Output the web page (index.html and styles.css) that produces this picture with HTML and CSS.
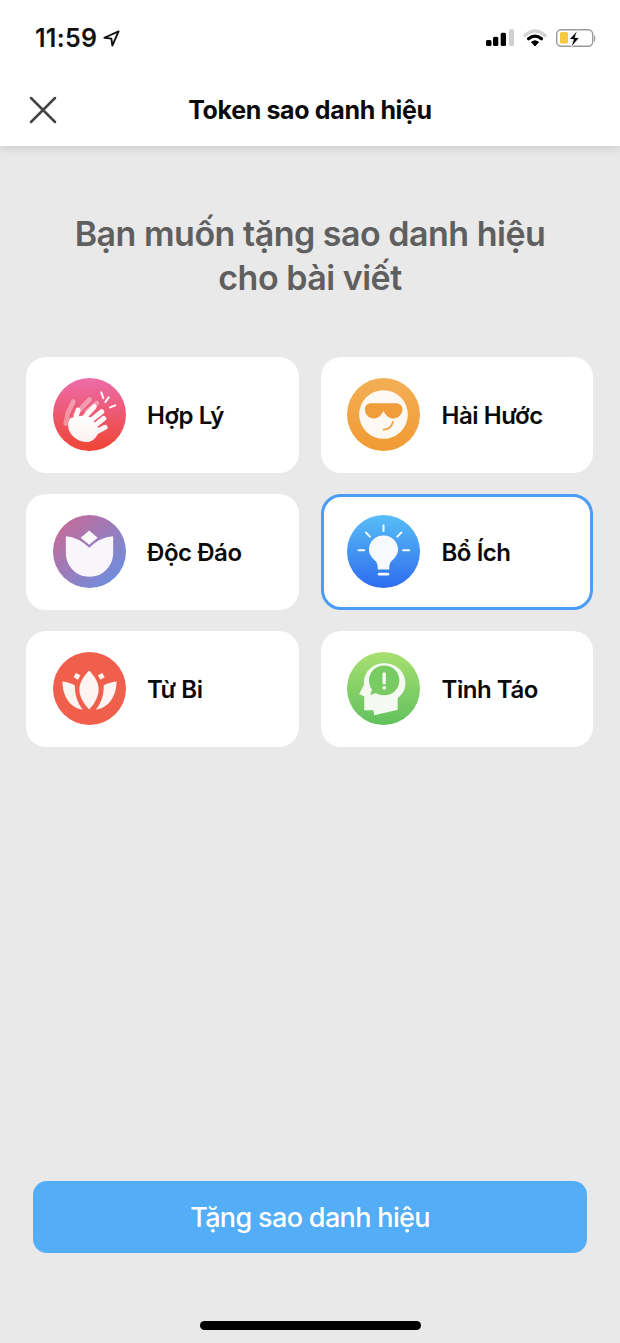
FILE: index.html
```html
<!DOCTYPE html>
<html lang="vi">
<head>
<meta charset="utf-8">
<title>Token sao danh hiệu</title>
<link rel="stylesheet" href="styles.css">
</head>
<body>
<div class="screen">
  <header class="top">
    <div class="status">
      <div class="clock">
        <span class="time">11:59</span>
        <svg class="loc" viewBox="0 0 18 18"><path d="M16.5 1.500 1.500 8.200l7.400.9 1 7.400z" fill="none" stroke="#111" stroke-width="2" stroke-linejoin="round"/></svg>
      </div>
      <svg class="sys" viewBox="0 0 112 20">
        <rect x="2" y="12" width="5.500" height="6" rx="1.500" fill="#000"/>
        <rect x="9" y="8.700" width="5.300" height="9.300" rx="1.500" fill="#000"/>
        <rect x="16.700" y="4.700" width="5.300" height="13.300" rx="1.500" fill="#000"/>
        <rect x="25" y="1.300" width="5" height="16.700" rx="1.500" fill="#d0d0d0"/>
        <path d="M41 7.500Q51-1.500 61 7.500" fill="none" stroke="#d4d4d4" stroke-width="3.500" stroke-linecap="round"/>
        <path d="M44.500 10.800Q51 5.500 57.500 10.800" fill="none" stroke="#000" stroke-width="3.200" stroke-linecap="round"/>
        <path d="M47.500 14Q51 11.500 54.500 14L51 18z" fill="#000" stroke="#000" stroke-linejoin="round"/>
        <rect x="72.700" y="1.700" width="36" height="16.500" rx="4.500" fill="#fff" stroke="#9a9a9a" stroke-width="1.400"/>
        <rect x="76" y="4" width="8" height="11.500" rx="1.500" fill="#f7c93e"/>
        <path d="M110 7c1.700.4 1.700 6.600 0 7z" fill="#9a9a9a"/>
        <path d="M93.500 2.500 85 11.500h4.500L87 19.500l8.500-10H91z" fill="#000" stroke="#fff" stroke-width=".8"/>
      </svg>
    </div>
    <div class="nav">
      <svg class="close" viewBox="0 0 28 28"><path d="M2 2 26 26M26 2 2 26" stroke="#444" stroke-width="2.500" stroke-linecap="round"/></svg>
      <h1 class="title">Token sao danh hiệu</h1>
    </div>
  </header>

  <main class="body">
    <h2 class="prompt">Bạn muốn tặng sao danh hiệu<br>cho bài viết</h2>
    <div class="grid">
      <div class="card">
        <svg class="icon" viewBox="0 0 216 216">
          <defs>
            <linearGradient id="g1" x1="0" y1="0" x2="0" y2="1"><stop offset="0" stop-color="#ec6cab"/><stop offset="1" stop-color="#ef4433"/></linearGradient>
            <linearGradient id="h1" x1="0" y1="0" x2="0" y2="1"><stop offset="0" stop-color="#ffffff"/><stop offset="1" stop-color="#fdf0f0"/></linearGradient>
          </defs>
          <circle cx="108" cy="108" r="108" fill="url(#g1)"/>
          <g fill="none" stroke="#fff" stroke-linecap="round">
            <g opacity=".38" stroke-width="14">
              <path d="M60 70 42 108M108 64 66 108M130 74 100 100M44 105 38 135"/>
            </g>
            <path d="M143 43 149 60M165 57 155 71M184 81 169 87" stroke-width="6"/>
          </g>
          <g fill="none" stroke="#fef8f8" stroke-width="15" stroke-linecap="round">
            <path d="M62 135 74 95M85 125 122 85M100 135 144 100M112 150 150 120M118 165 154 146"/>
          </g>
          <path d="M52 118C44 128 42 145 50 160 60 180 85 192 105 189 122 186 134 170 136 150L112 116 84 112Z" fill="url(#h1)"/>
        </svg>
        <span class="label">Hợp Lý</span>
      </div>
      <div class="card">
        <svg class="icon" viewBox="0 0 216 216">
          <defs>
            <linearGradient id="g2" x1="0" y1="0" x2="0" y2="1"><stop offset="0" stop-color="#f3af55"/><stop offset="1" stop-color="#f09a33"/></linearGradient>
          </defs>
          <circle cx="108" cy="108" r="108" fill="url(#g2)"/>
          <circle cx="108" cy="108" r="72" fill="#fdf8f1"/>
          <path d="M72 75H144C156 75 164 83 164 92 164 108 152 120 136 120 122 120 113 108 108 98 103 108 94 120 80 120 64 120 53 108 53 92 53 83 60 75 72 75Z" fill="#f09e3a"/>
          <path d="M108 153Q130 152 136 130" fill="none" stroke="#f09e3a" stroke-width="5" stroke-linecap="round"/>
        </svg>
        <span class="label">Hài Hước</span>
      </div>
      <div class="card">
        <svg class="icon" viewBox="0 0 216 216">
          <defs>
            <linearGradient id="g3" x1="0" y1="0" x2="1" y2="1"><stop offset=".1" stop-color="#c56b98"/><stop offset=".9" stop-color="#6c8fe0"/></linearGradient>
          </defs>
          <circle cx="108" cy="108" r="108" fill="url(#g3)"/>
          <path d="M107 46 132 67 107 88 82 67Z" fill="#fbf8fc"/>
          <path d="M38 63Q76 66 107 97 138 66 178 63V112C178 152 148 183 108 183 68 183 38 152 38 112Z" fill="#f8f6fb"/>
        </svg>
        <span class="label">Độc Đáo</span>
      </div>
      <div class="card selected">
        <svg class="icon" viewBox="0 0 216 216">
          <defs>
            <linearGradient id="g4" x1="0" y1="0" x2="0" y2="1"><stop offset="0" stop-color="#58bef6"/><stop offset="1" stop-color="#2e6cef"/></linearGradient>
          </defs>
          <circle cx="108" cy="108" r="108" fill="url(#g4)"/>
          <path d="M108 30V47M56 52 68 64M161 52 149 64M34 104H51M166 104H184" stroke="#f5fafe" stroke-width="6" stroke-linecap="round" fill="none"/>
          <path d="M108 61C131 61 151 79 151 102 151 118 140 128 131 137 126 143 125 150 125 161H91C91 150 90 143 85 137 76 128 65 118 65 102 65 79 85 61 108 61Z" fill="#f6fafe"/>
          <rect x="91" y="171" width="34" height="8" rx="4" fill="#f6fafe"/>
        </svg>
        <span class="label">Bổ Ích</span>
      </div>
      <div class="card">
        <svg class="icon" viewBox="0 0 216 216">
          <circle cx="108" cy="108" r="108" fill="#f05f4b"/>
          <path d="M107 55C126 75 135 92 135 112 135 133 122 155 107 170 92 155 78 133 78 112 78 92 88 75 107 55Z" fill="#fdf4f2"/>
          <path d="M28 87C42 88 56 93 65 99 64 125 72 150 88 170 55 167 28 135 28 87Z" fill="#fdf4f2"/>
          <path d="M188 87C174 88 160 93 150 99 151 125 143 150 127 170 160 167 188 135 188 87Z" fill="#fdf4f2"/>
          <path d="M68 62 81 69 74 82 61 75ZM146 62 133 69 140 82 153 75Z" fill="#fdf4f2"/>
        </svg>
        <span class="label">Từ Bi</span>
      </div>
      <div class="card">
        <svg class="icon" viewBox="0 0 216 216">
          <defs>
            <linearGradient id="g6" x1="0" y1="0" x2="0" y2="1"><stop offset="0" stop-color="#a8e071"/><stop offset="1" stop-color="#62c15e"/></linearGradient>
          </defs>
          <circle cx="108" cy="108" r="108" fill="url(#g6)"/>
          <path d="M110 33C145 33 173 58 173 92 173 112 163 127 150 137V171L81 187 78 172H51V132L36 124 50 98V92C50 58 76 33 110 33Z" fill="#f4faf1"/>
          <path d="M110 40C136 40 155 60 155 84 155 110 134 128 110 128 100 128 92 125 85 121L69 127 74 111C68 103 65 94 65 84 65 60 85 40 110 40Z" fill="#79cb64"/>
          <rect x="105" y="60" width="10" height="36" rx="5" fill="#f4faf1"/>
          <circle cx="110" cy="106" r="5.500" fill="#f4faf1"/>
        </svg>
        <span class="label">Tỉnh Táo</span>
      </div>
    </div>
    <button class="cta" type="button">Tặng sao danh hiệu</button>
    <div class="home"></div>
  </main>
</div>
</body>
</html>
```

FILE: styles.css
```css
* { box-sizing: border-box; }
html, body { margin: 0; padding: 0; }
body { font-family: "Inter", "Liberation Sans", sans-serif; background: #e9e9e9; }
.screen { width: 620px; height: 1343px; display: flex; flex-direction: column; overflow: hidden; }

.top { height: 146px; background: #fff; box-shadow: 0 1px 10px rgba(0,0,0,.16); position: relative; z-index: 1; flex: none; }
.status { height: 76px; display: flex; justify-content: space-between; align-items: center; padding: 0 24px 0 35px; }
.clock { display: flex; align-items: center; gap: 6px; }
.time { font-size: 25px; font-weight: 600; color: #111; letter-spacing: .3px; }
.loc { width: 17px; height: 17px; }
.sys { width: 112px; height: 20px; }
.nav { height: 70px; display: flex; align-items: center; justify-content: center; position: relative; padding-bottom: 3px; }
.close { position: absolute; left: 29px; top: 20px; width: 28px; height: 28px; }
.title { margin: 0; font-size: 25px; font-weight: 700; color: #0b0b0b; letter-spacing: -.35px; }

.body { flex: 1; display: flex; flex-direction: column; }
.prompt { margin: 66px 0 0; text-align: center; font-size: 34px; line-height: 44px; font-weight: 600; color: #5f5f5f; letter-spacing: -.5px; }
.grid { margin-top: 57px; padding: 0 27px 0 26px; display: grid; grid-template-columns: 1fr 1fr; grid-auto-rows: 115.5px; gap: 21.5px 22px; }
.card { background: #fff; border-radius: 20px; display: flex; align-items: center; gap: 21px; padding-left: 27px; }
.card:nth-child(even) { padding-left: 26.5px; gap: 21.5px; }
.card.selected { border: 3px solid #4a9cf4; padding-left: 23.5px; border-radius: 20px; }
.icon { width: 73px; height: 73px; flex: none; }
.label { font-size: 24px; font-weight: 600; color: #0a0a0a; letter-spacing: -.45px; padding-top: 2px; }

.cta { margin: auto 33px 0; height: 72px; flex: none; border: 0; border-radius: 14px; background: #53adf7; color: #fff; font-family: inherit; font-size: 27px; font-weight: 500; letter-spacing: -.65px; }
.home { width: 221px; height: 9px; border-radius: 5px; background: #000; margin: 68px auto 13px; flex: none; }
```
